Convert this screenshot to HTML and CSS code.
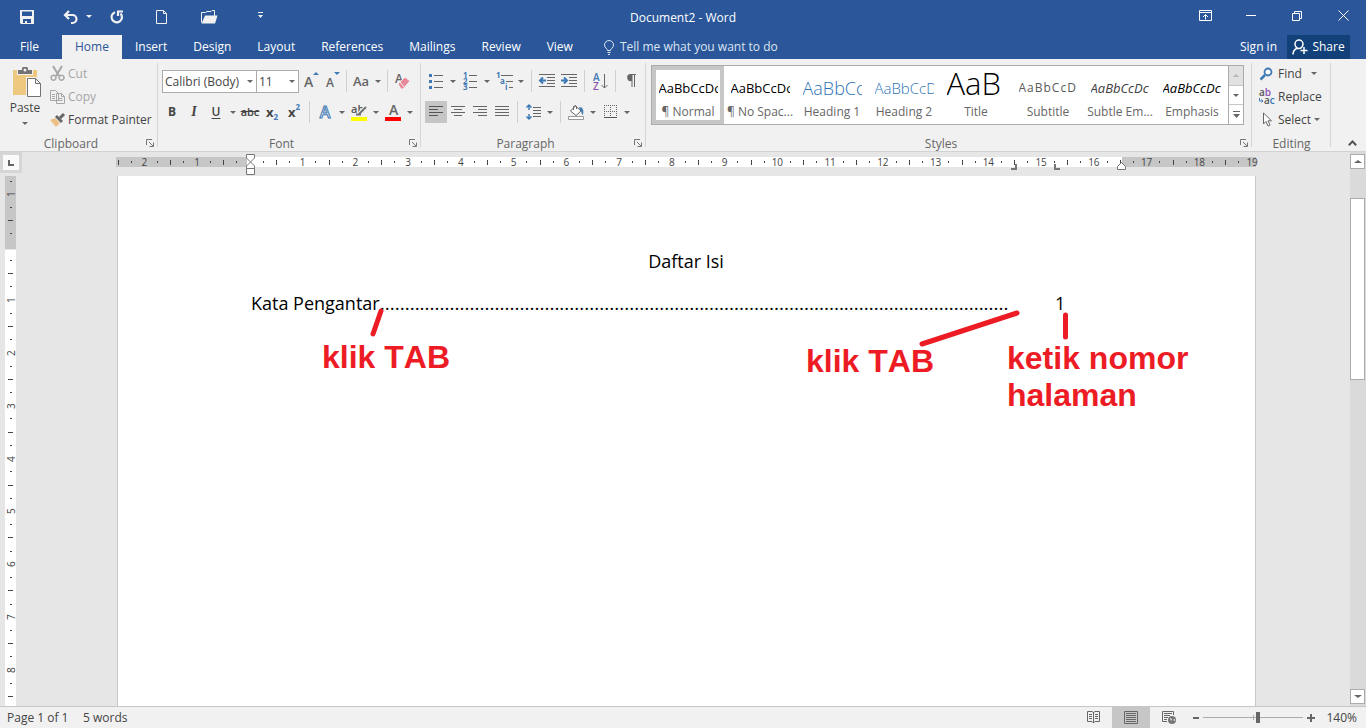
FILE: index.html
```html
<!DOCTYPE html>
<html lang="en">
<head>
    <meta charset="UTF-8">
    <meta name="viewport" content="width=device-width, initial-scale=1.0">
    <title>Document2 - Word</title>
    <link rel="stylesheet" href="styles.css">
</head>
<body>
    <header class="titlebar">
        <div class="quick-access">
            <button aria-label="Save"><svg width="14" height="14" viewBox="0 0 14 14"><path fill="#f1f1f1" fill-rule="evenodd" d="M0 0h14v14H1L0 13zM2 1.500v4.500h10V1.500zM3 9v4h2v-2h2v2h4V9z"/></svg></button>
            <button aria-label="Undo"><svg width="15" height="14" viewBox="0 0 15 14"><path fill="none" stroke="#f1f1f1" stroke-width="2.200" d="M6 1L2 5l4 4M2 5h7.500a3.500 3.500 0 0 1 0 8H8"/></svg><i class="caret"></i></button>
            <button aria-label="Repeat"><svg width="14" height="14" viewBox="0 0 14 14"><path fill="none" stroke="#f1f1f1" stroke-width="2.200" d="M5 2.200A5.200 5.200 0 1 0 10.500 3.500M8 6V1.500h5"/></svg></button>
            <button aria-label="New"><svg width="12" height="14" viewBox="0 0 12 14"><path fill="none" stroke="#f1f1f1" d="M.5.5h7l3 3v10H.5zM7.500.5v3h3"/></svg></button>
            <button aria-label="Open"><svg width="17" height="14" viewBox="0 0 17 14"><path fill="none" stroke="#f1f1f1" d="M.5 12.500v-10h4l1.500-1h4l1-1h2.500V6"/><path fill="#f1f1f1" d="M4 5.500h12.500L14 13.500H.5z"/></svg></button>
            <button aria-label="Customize"><svg width="7" height="6" viewBox="0 0 7 6"><path fill="#f1f1f1" d="M1 0h5v1H1zM1 3h5L3.500 6z"/></svg></button>
        </div>
        <div class="doc-title">Document2 - Word</div>
        <div class="window-controls">
            <button aria-label="Ribbon display options"><svg width="13" height="11" viewBox="0 0 13 11"><path fill="none" stroke="#fff" d="M.5.500h12v10H.5zM.5 2.500h12M6.500 9.500V5M4 7l2.500-2.500L9 7"/></svg></button>
            <button aria-label="Minimize"><svg width="10" height="11" viewBox="0 0 10 11"><path stroke="#fff" d="M0 5.500h10"/></svg></button>
            <button aria-label="Restore"><svg width="10" height="10" viewBox="0 0 10 10"><path fill="none" stroke="#fff" d="M.5 2.500h7v7h-7zM2.500 2.500v-2h7v7h-2"/></svg></button>
            <button aria-label="Close"><svg width="11" height="11" viewBox="0 0 11 11"><path stroke="#fff" d="M.5.500l10 10M10.500.500l-10 10"/></svg></button>
        </div>
    </header>

    <nav class="tabs">
        <a href="#" class="file-tab">File</a>
        <a href="#" class="active">Home</a>
        <a href="#">Insert</a>
        <a href="#">Design</a>
        <a href="#">Layout</a>
        <a href="#">References</a>
        <a href="#">Mailings</a>
        <a href="#">Review</a>
        <a href="#">View</a>
        <button class="tell-me"><svg width="10" height="15" viewBox="0 0 10 15"><path fill="none" stroke="#dbe5f3" d="M3.500 10.500c0-2-3-2.500-3-5.500a4.500 4.500 0 0 1 9 0c0 3-3 3.500-3 5.500zM3.500 12.500h3M4 14.500h2"/></svg>Tell me what you want to do</button>
        <a href="#" class="sign-in">Sign in</a>
        <button class="share"><svg width="16" height="16" viewBox="0 0 16 16"><path fill="none" stroke="#fff" stroke-width="1.500" d="M1 15.500c0-4 2-5.500 4.500-6.500M7 1a4 4 0 0 1 4 4c0 2.500-2 4.500-4 4.500S3 7.500 3 5a4 4 0 0 1 4-4zM12 8v7M8.500 11.500h7"/></svg>Share</button>
    </nav>

    <section class="ribbon">
        <div class="group clipboard">
            <div class="group-body">
                <button class="paste">
                    <svg width="28" height="30" viewBox="0 0 28 30"><path fill="#edc87e" d="M0 3h24v25H0z"/><path fill="#f1f1f1" d="M4 2h16v6H4z"/><path fill="#737373" d="M5 3h4V1l1-1h4l1 1v2h4v4H5z"/><circle cx="12" cy="3" r="1.500" fill="#f1f1f1"/><path fill="#f1f1f1" d="M13 10h10l5 5v15H13z"/><path fill="#fff" stroke="#737373" d="M14.500 11.500h8l5 5v13h-13zM22.500 11.500v5h5"/></svg>
                    <span>Paste</span>
                    <i class="caret"></i>
                </button>
                <div class="stack">
                    <button class="disabled"><svg width="15" height="15" viewBox="0 0 15 15"><path fill="none" stroke="#a6a6a6" stroke-width="2" d="M3 0l6 10M12 0L6 10"/><path fill="none" stroke="#a6a6a6" stroke-width="1.500" d="M3.500 9.200a2.500 2.500 0 1 0 .1 0zM11.500 9.200a2.500 2.500 0 1 0 .1 0z"/></svg>Cut</button>
                    <button class="disabled"><svg width="15" height="14" viewBox="0 0 15 14"><path fill="#f1f1f1" stroke="#a6a6a6" d="M.5.500h5l3 3v7h-8zM6.500 3.500h5l3 3v7h-8zM11.500 3.500v3h3M2 4.500h3M2 6.500h3M2 8.500h3M8.500 8.500h4M8.500 10.500h4"/></svg>Copy</button>
                    <button><svg width="15" height="14" viewBox="0 0 15 14"><path fill="#edc087" d="M0 7l5-2 5 5-4 4z"/><path fill="#666" d="M5 4l2-2 6 6-2 2z"/><path stroke="#666" stroke-width="3" d="M10 5l4-4"/></svg>Format Painter</button>
                </div>
            </div>
            <div class="group-label">Clipboard<svg class="launcher" width="8" height="8" viewBox="0 0 8 8"><path fill="none" stroke="#777" d="M.5 6V.500H6M3 3l4 4M7.500 3.500v4h-4"/></svg></div>
        </div>

        <div class="group font">
            <div class="group-body rows">
                <div class="row tight">
                    <label class="combo name"><select aria-label="Font"><option>Calibri (Body)</option></select><i class="caret"></i></label>
                    <label class="combo size"><select aria-label="Font size"><option>11</option></select><i class="caret"></i></label>
                    <button class="icon" aria-label="Increase font size"><svg width="18" height="20" viewBox="0 0 18 20"><text x="3" y="16" class="glyph-a">A</text><path fill="#3f79b5" d="M12 4h6l-3-3z"/></svg></button>
                    <button class="icon" aria-label="Decrease font size"><svg width="18" height="20" viewBox="0 0 18 20"><text x="3" y="16" class="glyph-a small">A</text><path fill="#3f79b5" d="M11 1h6l-3 3z"/></svg></button>
                    <span class="sep"></span>
                    <button class="icon aa">Aa</button><button class="drop" aria-label="Change case"><i class="caret"></i></button>
                    <span class="sep"></span>
                    <button class="icon" aria-label="Clear formatting"><svg width="16" height="18" viewBox="0 0 16 18"><text x="1" y="11" class="glyph-a small">A</text><path fill="#e8899a" stroke="#f1f1f1" d="M4 12l7-7 5 4-7 8H7z"/><path stroke="#f1f1f1" d="M6 10l4 5"/></svg></button>
                </div>
                <div class="row">
                    <button class="icon bold">B</button>
                    <button class="icon italic">I</button>
                    <button class="icon underline">U</button><button class="drop" aria-label="Underline style"><i class="caret"></i></button>
                    <button class="icon strike">abc</button>
                    <button class="icon script">x<sub>2</sub></button>
                    <button class="icon script">x<sup>2</sup></button>
                    <span class="sep"></span>
                    <button class="icon effects">A</button><button class="drop" aria-label="Text effects"><i class="caret"></i></button>
                    <button class="icon" aria-label="Highlight"><svg width="16" height="18" viewBox="0 0 16 18"><text x="0" y="10" class="glyph-ab">ab</text><path stroke="#f1f1f1" stroke-width="4" d="M8 11l7-7"/><path stroke="#737373" stroke-width="2" d="M8 11l7-7M5 11.500h5"/><path fill="#ff0" d="M0 14h16v4H0z"/></svg></button><button class="drop" aria-label="Highlight colour"><i class="caret"></i></button>
                    <button class="icon" aria-label="Font colour"><svg width="16" height="18" viewBox="0 0 16 18"><text x="4" y="12" class="glyph-a">A</text><path fill="red" d="M0 14h16v4H0z"/></svg></button><button class="drop" aria-label="Font colour menu"><i class="caret"></i></button>
                </div>
            </div>
            <div class="group-label">Font<svg class="launcher" width="8" height="8" viewBox="0 0 8 8"><path fill="none" stroke="#777" d="M.5 6V.500H6M3 3l4 4M7.500 3.500v4h-4"/></svg></div>
        </div>

        <div class="group paragraph">
            <div class="group-body rows">
                <div class="row">
                    <button class="icon" aria-label="Bullets"><svg width="14" height="16" viewBox="0 0 14 16"><path fill="#3f79b5" d="M0 1h3v3H0zM0 7h3v3H0zM0 13h3v3H0z"/><path stroke="#666" d="M5 2.500h9M5 8.500h9M5 14.500h9"/></svg></button><button class="drop" aria-label="Bullet library"><i class="caret"></i></button>
                    <button class="icon" aria-label="Numbering"><svg width="14" height="18" viewBox="0 0 14 18"><text x="0" y="6" class="glyph-n">1</text><text x="0" y="12" class="glyph-n">2</text><text x="0" y="18" class="glyph-n">3</text><path stroke="#666" d="M6 3.500h8M6 9.500h8M6 15.500h8"/></svg></button><button class="drop" aria-label="Number library"><i class="caret"></i></button>
                    <button class="icon" aria-label="Multilevel list"><svg width="17" height="18" viewBox="0 0 17 18"><text x="0" y="6" class="glyph-n">1</text><text x="4" y="12" class="glyph-n">a</text><text x="9" y="18" class="glyph-n">i</text><path stroke="#666" d="M5 3.500h12M10 9.500h7M13 15.500h4"/></svg></button><button class="drop" aria-label="List library"><i class="caret"></i></button>
                    <span class="sep"></span>
                    <button class="icon" aria-label="Decrease indent"><svg width="16" height="14" viewBox="0 0 16 14"><path stroke="#666" d="M0 .5h16M8 3.500h8M8 6.500h8M8 9.500h8M0 12.500h16"/><path fill="none" stroke="#3f79b5" stroke-width="2" d="M7 6.500H1M4 3.500l-3 3 3 3"/></svg></button>
                    <button class="icon" aria-label="Increase indent"><svg width="16" height="14" viewBox="0 0 16 14"><path stroke="#666" d="M0 .5h16M8 3.500h8M8 6.500h8M8 9.500h8M0 12.500h16"/><path fill="none" stroke="#3f79b5" stroke-width="2" d="M0 6.500h6M3 3.500l3 3-3 3"/></svg></button>
                    <span class="sep"></span>
                    <button class="icon" aria-label="Sort"><svg width="15" height="17" viewBox="0 0 15 17"><text x="0" y="8" class="glyph-az">A</text><text x="0" y="17" class="glyph-az z">Z</text><path fill="none" stroke="#666" d="M11.500 1v14M8.500 12l3 3 3-3"/></svg></button>
                    <span class="sep"></span>
                    <button class="icon" aria-label="Show paragraph marks"><svg width="11" height="14" viewBox="0 0 11 14"><path fill="#666" d="M4 0h6v1H9v12H8V1H6.500v12h-1V7A3.500 3.500 0 0 1 4 0z"/></svg></button>
                </div>
                <div class="row">
                    <button class="icon pressed" aria-label="Align left"><svg width="14" height="12" viewBox="0 0 14 12"><path stroke="#555" d="M0 .5h14M0 3.500h9M0 6.500h14M0 9.500h9"/></svg></button>
                    <button class="icon" aria-label="Center"><svg width="14" height="12" viewBox="0 0 14 12"><path stroke="#666" d="M0 .5h14M3 3.500h8M0 6.500h14M3 9.500h8"/></svg></button>
                    <button class="icon" aria-label="Align right"><svg width="14" height="12" viewBox="0 0 14 12"><path stroke="#666" d="M0 .5h14M5 3.500h9M0 6.500h14M5 9.500h9"/></svg></button>
                    <button class="icon" aria-label="Justify"><svg width="14" height="12" viewBox="0 0 14 12"><path stroke="#666" d="M0 .5h14M0 3.500h14M0 6.500h14M0 9.500h14"/></svg></button>
                    <span class="sep"></span>
                    <button class="icon" aria-label="Line spacing"><svg width="15" height="16" viewBox="0 0 15 16"><path fill="none" stroke="#3f79b5" stroke-width="1.500" d="M3 1v5M3 10v5M.5 3.500L3 1l2.500 2.500M.5 12.500L3 15l2.500-2.500"/><path stroke="#666" d="M7 3.500h8M7 6.500h8M7 9.500h8M7 12.500h8"/></svg></button><button class="drop" aria-label="Spacing options"><i class="caret"></i></button>
                    <span class="sep"></span>
                    <button class="icon" aria-label="Shading"><svg width="16" height="16" viewBox="0 0 16 16"><path fill="#fff" stroke="#666" d="M2.500 7l5-5 5.500 5-5 4.500zM5.500 6V2.500a2 2 0 0 1 3 0V5"/><path fill="#3f79b5" d="M11 3c4 0 5 3 4 8-2-1-1-4-3-5z"/><path fill="#fff" stroke="#999" d="M.5 12.500h15v3H.5z"/></svg></button><button class="drop" aria-label="Shading colour"><i class="caret"></i></button>
                    <button class="icon" aria-label="Borders"><svg width="13" height="14" viewBox="0 0 13 14"><path fill="none" stroke="#666" stroke-dasharray="1 1" d="M0 .5h13M0 6.500h13M.5 0v13M6.500 0v13M12.500 0v13"/><path stroke="#555" d="M0 12.500h13"/></svg></button><button class="drop" aria-label="Border options"><i class="caret"></i></button>
                </div>
            </div>
            <div class="group-label">Paragraph<svg class="launcher" width="8" height="8" viewBox="0 0 8 8"><path fill="none" stroke="#777" d="M.5 6V.500H6M3 3l4 4M7.500 3.500v4h-4"/></svg></div>
        </div>

        <div class="group styles">
            <div class="group-body">
                <div class="gallery">
                    <button class="style selected"><span class="preview">AaBbCcDc</span><span>¶ Normal</span></button>
                    <button class="style"><span class="preview">AaBbCcDc</span><span>¶ No Spac...</span></button>
                    <button class="style"><span class="preview heading1">AaBbCc</span><span>Heading 1</span></button>
                    <button class="style"><span class="preview heading2">AaBbCcD</span><span>Heading 2</span></button>
                    <button class="style"><span class="preview title">AaB</span><span>Title</span></button>
                    <button class="style"><span class="preview subtitle">AaBbCcD</span><span>Subtitle</span></button>
                    <button class="style"><span class="preview subtle">AaBbCcDc</span><span>Subtle Em...</span></button>
                    <button class="style"><span class="preview emphasis">AaBbCcDc</span><span>Emphasis</span></button>
                    <div class="gallery-scroll">
                        <button class="off" aria-label="Previous styles"><i class="caret up"></i></button>
                        <button aria-label="Next styles"><i class="caret"></i></button>
                        <button aria-label="More styles"><svg width="7" height="7" viewBox="0 0 7 7"><path fill="#666" d="M0 0h7v1H0zM0 3h7L3.500 7z"/></svg></button>
                    </div>
                </div>
            </div>
            <div class="group-label">Styles<svg class="launcher" width="8" height="8" viewBox="0 0 8 8"><path fill="none" stroke="#777" d="M.5 6V.500H6M3 3l4 4M7.500 3.500v4h-4"/></svg></div>
        </div>

        <div class="group editing">
            <div class="group-body">
                <div class="stack">
                    <button><svg width="16" height="14" viewBox="0 0 16 14"><circle cx="9" cy="5" r="3.500" fill="#fff" stroke="#3f79b5" stroke-width="1.800"/><path stroke="#3f79b5" stroke-width="2.500" d="M6 8l-4.500 4.500"/></svg>Find<i class="caret wide"></i></button>
                    <button><svg width="16" height="18" viewBox="0 0 16 18"><text x="0" y="8" class="glyph-r">a<tspan fill="#8b50ad">b</tspan></text><text x="5" y="16" class="glyph-r">a<tspan fill="#3f79b5">c</tspan></text><path fill="none" stroke="#3f79b5" d="M.5 10v3h3M2.500 11.500l1.500 1.500-1.500 1.500"/></svg>Replace</button>
                    <button><svg width="16" height="15" viewBox="0 0 16 15"><path fill="#fff" stroke="#666" d="M4.500 1v11l2.500-2.500 2 4.500 2-1-2-4.200h3.500z"/></svg>Select<i class="caret"></i></button>
                </div>
            </div>
            <div class="group-label">Editing</div>
        </div>
        <button class="collapse" aria-label="Collapse the ribbon"><svg width="9" height="6" viewBox="0 0 9 6"><path fill="none" stroke="#555" stroke-width="2" d="M.8 5.200L4.500 1.500l3.700 3.700"/></svg></button>
    </section>

    <main class="workspace">
        <div class="left-rail">
            <button class="tab-selector" aria-label="Tab stop type"><svg width="6" height="6" viewBox="0 0 6 6"><path fill="#666" d="M0 0h2v4h4v2H0z"/></svg></button>
            <div class="v-ruler"></div>
        </div>

        <div class="canvas">
            <div class="h-ruler">
                <div class="ruler-text-area"></div>
                <div class="marks"></div>
                <svg class="marker indent" width="9" height="22" viewBox="0 0 9 22"><path fill="#fff" stroke="#777" d="M.5.500h8V4l-4 4-4-4zM.5 14.500V12l4-4 4 4v2.500zM.5 14.500h8v6h-8z"/></svg>
                <svg class="marker tab-right" width="6" height="6" viewBox="0 0 6 6"><path fill="#777" d="M6 0H4v4H0v2h6z"/></svg>
                <svg class="marker tab-left" width="6" height="6" viewBox="0 0 6 6"><path fill="#777" d="M0 0h2v4h4v2H0z"/></svg>
                <svg class="marker right-indent" width="9" height="8" viewBox="0 0 9 8"><path fill="#fff" stroke="#777" d="M.5 7.500V4.500l4-4 4 4v3z"/></svg>
            </div>
            <article class="page">
                <p class="heading">Daftar Isi</p>
                <p class="entry"><span>Kata Pengantar</span><span class="leader"></span><span class="number">1</span></p>

                <svg class="pointers" width="1000" height="200" viewBox="0 0 1000 200"><path fill="none" stroke="#ed1c24" stroke-width="5" stroke-linecap="round" d="M263 135l-8 23M899 137l-95 31M947.500 139v22"/></svg>
                <strong class="note first">klik TAB</strong>
                <strong class="note second">klik TAB</strong>
                <strong class="note third">ketik nomor<br>halaman</strong>
            </article>
        </div>

        <div class="scrollbar">
            <button aria-label="Scroll up"><i class="caret up"></i></button>
            <div class="track"><div class="thumb"></div></div>
            <button aria-label="Scroll down"><i class="caret"></i></button>
        </div>
    </main>

    <footer class="statusbar">
        <span class="pages">Page 1 of 1</span>
        <span>5 words</span>
        <div class="views">
            <button aria-label="Read mode"><svg width="13" height="13" viewBox="0 0 13 13"><path fill="none" stroke="#666" d="M6.500 1.500L5 .5H.5v10H5l1.500 1.500L8 10.500h4.500V.500H8zM6.500 1v11M2 3.500h3M2 5.500h3M2 7.500h3M8 3.500h3M8 5.500h3M8 7.500h3"/></svg></button>
            <button class="current" aria-label="Print layout"><svg width="14" height="13" viewBox="0 0 14 13"><path fill="none" stroke="#666" d="M.5.500h13v12H.5zM2 2.500h10M2 4.500h10M2 6.500h10M2 8.500h10M2 10.500h10"/></svg></button>
            <button aria-label="Web layout"><svg width="14" height="13" viewBox="0 0 14 13"><path fill="none" stroke="#666" d="M5 10.500H.5V.500h11V4M2 2.500h8M2 4.500h6M2 6.500h4M2 8.500h3"/><circle cx="10" cy="9" r="4" fill="#777"/><path fill="#f1f1f1" d="M8 7l2 1-1 2zM11 9l2-1v2z"/></svg></button>
        </div>
        <div class="zoom">
            <button aria-label="Zoom out"><svg width="6" height="2" viewBox="0 0 6 2"><path fill="#666" d="M0 0h6v2H0z"/></svg></button>
            <input type="range" min="0" max="100" value="55" aria-label="Zoom">
            <button aria-label="Zoom in"><svg width="8" height="8" viewBox="0 0 8 8"><path fill="#666" d="M3 0h2v3h3v2H5v3H3V5H0V3h3z"/></svg></button>
            <span>140%</span>
        </div>
    </footer>

    <script>
        // one mark every quarter of a centimetre
        function addMarks(box, from, to) {
            for (let i = from; i <= to; i++) {
                const mark = document.createElement('span');
                if (i === 0) {
                    mark.className = 'zero';
                } else if (i % 4 === 0) {
                    mark.className = 'num';
                    mark.textContent = Math.abs(i / 4);
                } else {
                    mark.className = i % 2 === 0 ? 'half' : 'quarter';
                }
                box.appendChild(mark);
            }
        }

        addMarks(document.querySelector('.marks'), -10, 76);
        addMarks(document.querySelector('.v-ruler'), -5, 34);
        document.querySelector('.leader').textContent = '.'.repeat(126);
    </script>
</body>
</html>
```
FILE: styles.css
```css
* {
    box-sizing: border-box;
}

body {
    margin: 0;
    height: 100vh;
    display: flex;
    flex-direction: column;
    font-family: 'Open Sans', 'Noto Sans', sans-serif;
    font-size: 12px;
    line-height: 16px;
    color: #444;
    background-color: #e6e6e6;
    overflow: hidden;
}

button {
    display: flex;
    align-items: center;
    justify-content: center;
    padding: 0;
    border: none;
    background: none;
    font: inherit;
    color: inherit;
    cursor: pointer;
}

svg {
    display: block;
    flex: none;
    overflow: visible;
}

p {
    margin: 0;
}

.caret {
    width: 0;
    height: 0;
    border: 3px solid transparent;
    border-top-color: #666;
    border-bottom: none;
    flex: none;
}

.caret.up {
    border-top: none;
    border-bottom: 3px solid #666;
}

/* Title bar */
.titlebar {
    display: grid;
    grid-template-columns: 1fr auto 1fr;
    height: 35px;
    flex: none;
    background-color: #2b579a;
    color: #fff;
}

.quick-access {
    display: grid;
    grid-template-columns: 46px 54px 26px 64px 30px 72px;
    padding: 0 0 2px 4px;
}

.quick-access .caret {
    border-top-color: #f1f1f1;
    margin-left: 8px;
}

.quick-access button:last-child {
    padding-bottom: 4px;
}

.doc-title {
    align-self: center;
}

.window-controls {
    display: flex;
    justify-content: flex-end;
    padding-bottom: 4px;
}

.window-controls button {
    width: 46px;
}

/* Ribbon tabs */
.tabs {
    display: flex;
    align-items: stretch;
    height: 24px;
    flex: none;
    background-color: #2b579a;
    padding-right: 16px;
}

.tabs a {
    padding: 4px 13px;
    color: #fff;
    text-decoration: none;
}

.tabs .file-tab {
    width: 62px;
    padding: 4px 20px;
}

.tabs .active {
    background-color: #f1f1f1;
    color: #2b579a;
}

.tell-me {
    gap: 6px;
    margin-left: 18px;
    color: #dbe5f3;
}

.tabs .sign-in {
    margin-left: auto;
    padding: 4px 10px;
}

.share {
    width: 63px;
    gap: 4px;
    background-color: #124078;
    color: #fff;
}

/* Ribbon */
.ribbon {
    display: flex;
    height: 93px;
    flex: none;
    background-color: #f1f1f1;
    border-bottom: 1px solid #d2d2d2;
}

.group {
    position: relative;
    display: flex;
    flex-direction: column;
    flex: none;
}

.group::after {
    content: "";
    position: absolute;
    right: 0;
    top: 4px;
    bottom: 4px;
    width: 1px;
    background-color: #d5d5d5;
}

.group-body {
    display: flex;
    flex: 1;
}

.group-label {
    display: flex;
    align-items: center;
    justify-content: center;
    height: 16px;
    color: #666;
    padding: 1px 32px 0 16px;
}

.launcher {
    position: absolute;
    right: 4px;
    bottom: 4px;
}

.clipboard {
    width: 158px;
}

.font {
    width: 263px;
}

.paragraph {
    width: 225px;
}

.styles {
    flex: 1;
}

.editing {
    width: 79px;
}

.editing .group-label {
    padding: 1px 0 0;
}

.paste {
    flex-direction: column;
    justify-content: flex-start;
    width: 50px;
    padding-top: 8px;
}

.paste svg {
    margin-left: 4px;
}

.paste span {
    margin: 3px 0 6px;
}

.stack {
    display: flex;
    flex-direction: column;
    padding-top: 3px;
}

.stack button {
    justify-content: flex-start;
    height: 23px;
    gap: 3px;
}

.stack .disabled {
    color: #a6a6a6;
}

.stack .wide {
    margin-left: 6px;
}

.editing .stack {
    padding-left: 7px;
}

.rows {
    flex-direction: column;
    gap: 9px;
    padding: 11px 0 0 3px;
}

.paragraph .rows {
    padding-left: 4px;
}

.rows .tight {
    padding-left: 1px;
}

.row {
    display: flex;
    height: 22px;
}

.sep {
    width: 1px;
    margin: 0 4px;
    background-color: #d0d0d0;
}

.tight .sep {
    margin: 0 3px;
}

.combo {
    position: relative;
    height: 23px;
}

.combo.name {
    width: 95px;
    margin-right: -1px;
}

.combo.size {
    width: 43px;
}

.combo select {
    appearance: none;
    width: 100%;
    height: 100%;
    padding: 0 2px;
    border: 1px solid #ababab;
    border-radius: 0;
    background-color: #fff;
    font: inherit;
    color: #444;
}

.combo .caret {
    position: absolute;
    right: 4px;
    top: 10px;
    pointer-events: none;
}

.icon {
    width: 22px;
}

.drop {
    width: 12px;
}

.pressed {
    background-color: #c5c5c5;
}

.aa {
    font-size: 13px;
    font-weight: 600;
    color: #666;
}

.bold {
    font-weight: bold;
}

.italic {
    font-family: 'Liberation Serif', serif;
    font-size: 14px;
    font-style: italic;
    font-weight: bold;
}

.underline {
    font-weight: 600;
    text-decoration: underline;
    text-underline-offset: 2px;
}

.strike {
    font-size: 11px;
    font-weight: 600;
    text-decoration: line-through;
}

.script {
    font-size: 13px;
    font-weight: bold;
}

.script sub,
.script sup {
    font-size: 8px;
    line-height: 8px;
    color: #3f79b5;
}

.script sub {
    align-self: flex-end;
    padding-bottom: 2px;
}

.script sup {
    align-self: flex-start;
    padding-top: 2px;
}

.effects {
    font-size: 16px;
    font-weight: 600;
    color: #f1f1f1;
    -webkit-text-stroke: 1px #3f79b5;
}

.glyph-a {
    font-size: 14px;
    font-weight: 600;
    fill: #666;
}

.glyph-a.small {
    font-size: 12px;
}

.glyph-ab {
    font-size: 11px;
    font-weight: 600;
    fill: #555;
}

.glyph-n {
    font-size: 8px;
    font-weight: bold;
    fill: #3f79b5;
}

.glyph-az {
    font-size: 10px;
    font-weight: 600;
    fill: #3f79b5;
}

.glyph-az.z {
    fill: #8b50ad;
}

.glyph-r {
    font-size: 10px;
    font-weight: 600;
    fill: #555;
}

/* Style gallery */
.gallery {
    display: flex;
    flex: 1;
    height: 60px;
    margin: 6px 8px 0 5px;
    border: 1px solid #ababab;
    background-color: #fff;
}

.style {
    flex: 1;
    min-width: 0;
    flex-direction: column;
    justify-content: flex-end;
    padding-bottom: 4px;
    color: #666;
    white-space: nowrap;
}

.style.selected {
    box-shadow: inset 0 0 0 4px #c6c6c6;
}

.preview {
    width: 59px;
    height: 32px;
    font-size: 13px;
    line-height: 32px;
    overflow: hidden;
    text-align: left;
    color: #000;
}

.preview.heading1 {
    font-size: 18px;
    font-weight: 300;
    color: #2e74b5;
}

.preview.heading2 {
    font-size: 15px;
    font-weight: 300;
    color: #2e74b5;
}

.preview.title {
    font-size: 31px;
    font-weight: 300;
    line-height: 22px;
}

.preview.subtitle {
    font-size: 12px;
    color: #5a5a5a;
    letter-spacing: 1px;
}

.preview.subtle {
    color: #404040;
    font-style: italic;
}

.preview.emphasis {
    font-style: italic;
}

.gallery-scroll {
    display: flex;
    flex-direction: column;
    width: 15px;
    border-left: 1px solid #ababab;
}

.gallery-scroll button {
    flex: 1;
    border-bottom: 1px solid #c6c6c6;
}

.gallery-scroll button:last-child {
    border-bottom: none;
}

.gallery-scroll .off {
    background-color: #e1e1e1;
}

.gallery-scroll .off .caret {
    border-bottom-color: #b5b5b5;
}

.collapse {
    width: 35px;
    align-self: flex-end;
    height: 17px;
    padding-left: 7px;
}

/* Editing area */
.workspace {
    display: flex;
    flex: 1;
    min-height: 0;
}

.left-rail {
    display: flex;
    flex-direction: column;
    width: 22px;
}

.tab-selector {
    width: 22px;
    height: 21px;
    flex: none;
    border: 3px solid #d6d6d6;
    background-color: #fafafa;
    margin-bottom: 3px;
}

.v-ruler {
    display: flex;
    flex-direction: column;
    justify-content: space-between;
    flex: 1;
    width: 11px;
    margin-left: 5px;
    padding: 5px 0 9px;
    background: linear-gradient(#c6c6c6 73px, #e6e6e6 73px, #e6e6e6 74px, #fff 74px);
}

.v-ruler span,
.marks span {
    display: flex;
    align-items: center;
    justify-content: center;
    font-size: 10px;
    line-height: 10px;
}

.v-ruler span {
    height: 0;
}

.v-ruler .num {
    writing-mode: vertical-rl;
    transform: rotate(180deg);
}

.v-ruler .half::before,
.v-ruler .quarter::before {
    content: "";
    flex: none;
    width: 5px;
    height: 1px;
    background-color: #444;
}

.v-ruler .quarter::before {
    width: 2px;
}

.canvas {
    display: flex;
    flex-direction: column;
    flex: 1;
    padding: 0 94px 0 95px;
}

.h-ruler {
    position: relative;
    height: 10px;
    margin: 5px 0 9px -1px;
    flex: none;
    background-color: #c6c6c6;
}

.ruler-text-area {
    height: 10px;
    margin: 0 134px 0 131px;
    background-color: #fff;
}

.marks {
    position: absolute;
    inset: 0 3px 0 2px;
    display: flex;
    align-items: center;
    justify-content: space-between;
}

.marks span {
    width: 0;
    height: 10px;
}

.marks .half::before,
.marks .quarter::before {
    content: "";
    flex: none;
    width: 1px;
    height: 5px;
    background-color: #444;
}

.marks .quarter::before {
    height: 2px;
}

.marker {
    position: absolute;
}

.marker.indent {
    left: 130px;
    top: -3px;
}

.marker.tab-right {
    right: 239px;
    top: 7px;
}

.marker.tab-left {
    right: 196px;
    top: 7px;
}

.marker.right-indent {
    right: 130px;
    top: 5px;
}

.page {
    position: relative;
    flex: 1;
    padding: 71px 134px 0 133px;
    border: 1px solid #c6c6c6;
    border-width: 0 1px;
    background-color: #fff;
    color: #000;
    font-size: 18px;
    line-height: 28px;
}

.page .heading {
    text-align: center;
    margin-bottom: 14px;
}

.entry {
    display: flex;
}

.leader {
    flex: 1;
    width: 0;
    overflow: hidden;
    margin-right: 44px;
    font-size: 19px;
}

.number {
    width: 66px;
}

.pointers {
    position: absolute;
    left: 0;
    top: 0;
}

.note {
    position: absolute;
    font-family: 'Liberation Sans', Arial, sans-serif;
    font-size: 32px;
    font-kerning: none;
    line-height: 37px;
    color: #ed1c24;
    white-space: nowrap;
}

.note.first {
    left: 204px;
    top: 163px;
}

.note.second {
    left: 688px;
    top: 167px;
}

.note.third {
    left: 889px;
    top: 164px;
}

.scrollbar {
    display: flex;
    flex-direction: column;
    width: 16px;
    padding: 2px 1px 2px 0;
    background-color: #dadada;
}

.scrollbar button {
    height: 15px;
    flex: none;
    border: 1px solid #ababab;
    background-color: #fff;
}

.scrollbar .caret {
    border-left-width: 4px;
    border-right-width: 4px;
}

.track {
    flex: 1;
    padding-top: 29px;
}

.thumb {
    height: 37%;
    border: 1px solid #ababab;
    background-color: #fff;
}

/* Status bar */
.statusbar {
    display: flex;
    align-items: center;
    height: 22px;
    flex: none;
    padding: 0 9px 0 7px;
    border-top: 1px solid #c6c6c6;
    background-color: #f1f1f1;
}

.pages {
    width: 76px;
}

.views {
    display: flex;
    align-self: stretch;
    margin-left: auto;
}

.views button {
    width: 38px;
}

.views .current {
    background-color: #c6c6c6;
}

.zoom {
    display: flex;
    align-items: center;
    gap: 4px;
    margin-left: 5px;
}

.zoom input {
    appearance: none;
    width: 100px;
    height: 12px;
    margin: 0;
    background: linear-gradient(#ababab, #ababab) center / 100% 1px no-repeat, linear-gradient(#ababab, #ababab) center / 1px 5px no-repeat;
}

.zoom input::-webkit-slider-thumb {
    appearance: none;
    width: 4px;
    height: 11px;
    background-color: #666;
}

.zoom span {
    margin-left: 7px;
}
```
